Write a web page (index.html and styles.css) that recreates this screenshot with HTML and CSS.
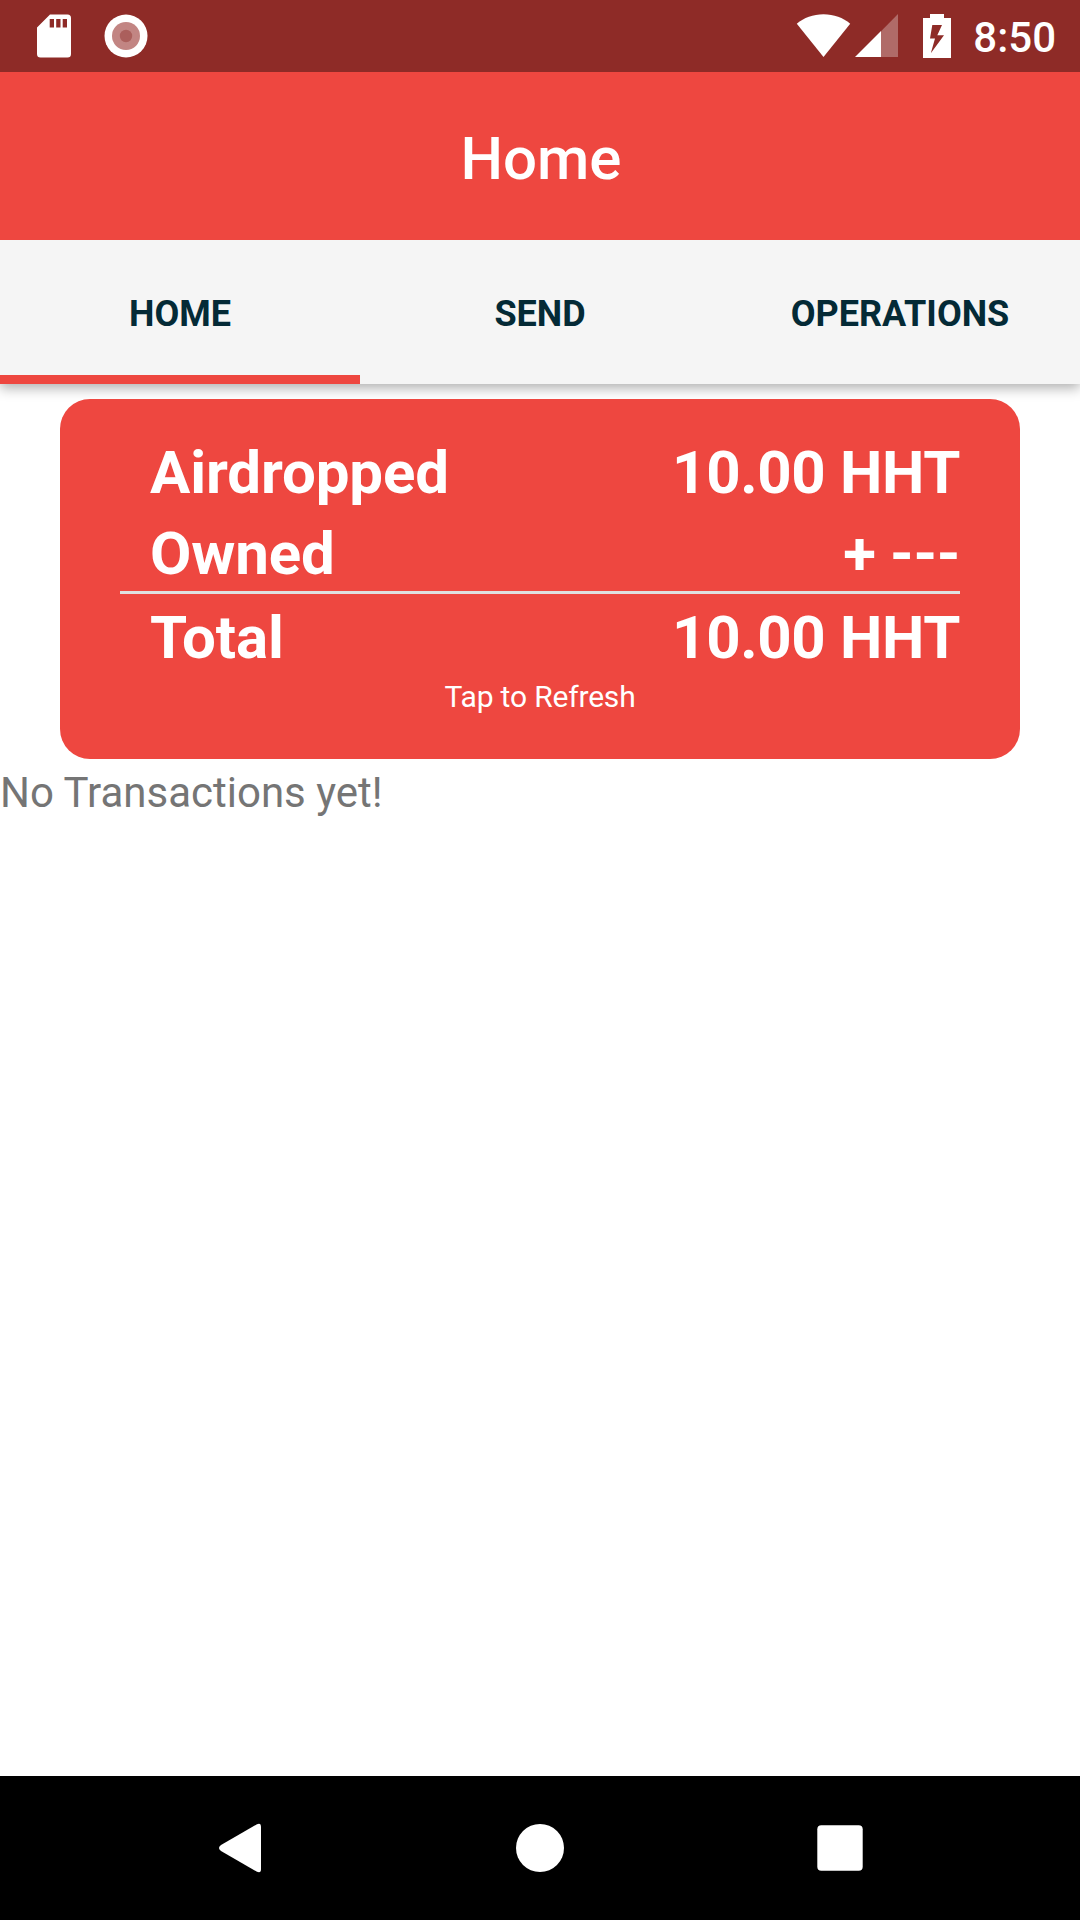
FILE: index.html
```html
<!DOCTYPE html>
<html lang="en">
<head>
<meta charset="utf-8">
<title>Home</title>
<link rel="stylesheet" href="styles.css">
</head>
<body>
<div class="screen">
  <div class="status-bar">
    <svg class="status-icons" width="160" height="72" viewBox="0 0 160 72">
      <path fill="#fff" fill-rule="evenodd" d="M50 14.5H67.500Q71 14.500 71 18V54Q71 57.500 67.500 57.500H40.500Q37 57.500 37 54V27.500ZM49.700 19V27.500H54V19ZM56.200 19V27.500H60.500V19ZM62.700 19V27.500H67V19Z"/>
      <circle cx="126" cy="36" r="21.500" fill="#fff"/>
      <circle cx="126" cy="36" r="14" fill="#c28583"/>
      <circle cx="126" cy="36" r="6.200" fill="#ab5f5c"/>
    </svg>
    <div class="status-right">
      <svg width="164" height="72" viewBox="790 0 164 72">
        <path fill="#fff" d="M823.500 57L796.800 23.700C804 17.800 813 14.300 823.500 14.300S843 17.800 850.200 23.700Z"/>
        <path fill="#fff" fill-opacity=".3" d="M881 57V31.200L898 14V57Z"/>
        <path fill="#fff" d="M855 57L881 31V57Z"/>
        <path fill="#fff" fill-rule="evenodd" d="M930 14H944V18H951V58H923V18H930ZM932.300 25L930 38.500H935L930.800 53.300L944 35.300H937.300L942 25Z"/>
      </svg>
      <span class="clock">8:50</span>
    </div>
  </div>
  <header class="header">Home</header>
  <nav class="tabs">
    <div class="tab tab-active">HOME</div>
    <div class="tab">SEND</div>
    <div class="tab">OPERATIONS</div>
  </nav>
  <main class="content">
    <section class="card">
      <div class="row"><span>Airdropped</span><span class="amount">10.00 HHT</span></div>
      <div class="row row-line"><span>Owned</span><span class="amount">+ ---</span></div>
      <div class="row"><span>Total</span><span class="amount">10.00 HHT</span></div>
      <div class="refresh">Tap to Refresh</div>
    </section>
    <p class="empty">No Transactions yet!</p>
  </main>
  <footer class="nav-bar">
    <svg width="60" height="60" viewBox="0 0 60 60"><path fill="#fff" d="M46.500 6.500Q51 4 51 9V51Q51 56 46.500 53.500L11 33Q7 30 11 27Z"/></svg>
    <svg width="60" height="60" viewBox="0 0 60 60"><circle cx="30" cy="30" r="24" fill="#fff"/></svg>
    <svg width="60" height="60" viewBox="0 0 60 60"><rect x="7.300" y="7.300" width="45.400" height="45.400" rx="4" fill="#fff"/></svg>
  </footer>
</div>
</body>
</html>
```
FILE: styles.css
```css
* { box-sizing: border-box; }
body {
  margin: 0;
  font-family: Roboto, sans-serif;
  background: #fff;
}
svg { display: block; }
.screen {
  width: 1080px;
  height: 1920px;
  display: flex;
  flex-direction: column;
  overflow: hidden;
}
.status-bar {
  height: 72px;
  background: #8e2b27;
  display: flex;
  justify-content: space-between;
}
.status-right {
  display: flex;
  padding-right: 24px;
}
.clock {
  width: 102px;
  text-align: right;
  color: #fff;
  font-size: 42px;
  font-weight: 500;
  line-height: 76px;
}
.header {
  position: relative;
  z-index: 1;
  height: 168px;
  padding-left: 2px;
  background: #ee4740;
  color: #fff;
  font-size: 60px;
  font-weight: 500;
  line-height: 174px;
  text-align: center;
}
.tabs {
  height: 144px;
  display: grid;
  grid-template-columns: repeat(3, 1fr);
  grid-template-rows: 144px;
  background: #f5f5f5;
  color: #042a36;
  box-shadow: 0 4px 12px rgba(0, 0, 0, 0.32);
}
.tab {
  text-align: center;
  font-size: 36px;
  font-weight: 700;
  line-height: 148px;
}
.tab-active { border-bottom: 9px solid #ee4740; }
.content {
  flex: 1;
  padding-top: 15px;
}
.card {
  height: 360px;
  margin: 0 60px;
  padding: 33px 60px 0;
  border-radius: 30px;
  background: #ee4740;
  color: #fff;
}
.row {
  display: flex;
  justify-content: space-between;
  height: 81px;
  padding-left: 30px;
  font-size: 60px;
  font-weight: 700;
  line-height: 81px;
  letter-spacing: -0.1px;
}
.amount { letter-spacing: -0.35px; }
.row-line {
  border-bottom: 3px solid #e0e0e0;
  margin-bottom: 3px;
}
.refresh {
  font-size: 30px;
  line-height: 36px;
  margin-top: 1px;
  letter-spacing: -0.18px;
  text-align: center;
}
.empty {
  margin: 9px 0 0;
  color: #757575;
  font-size: 42px;
  line-height: 50px;
}
.nav-bar {
  height: 144px;
  background: #000;
  display: flex;
  align-items: center;
  justify-content: space-between;
  padding: 0 210px;
}
```
